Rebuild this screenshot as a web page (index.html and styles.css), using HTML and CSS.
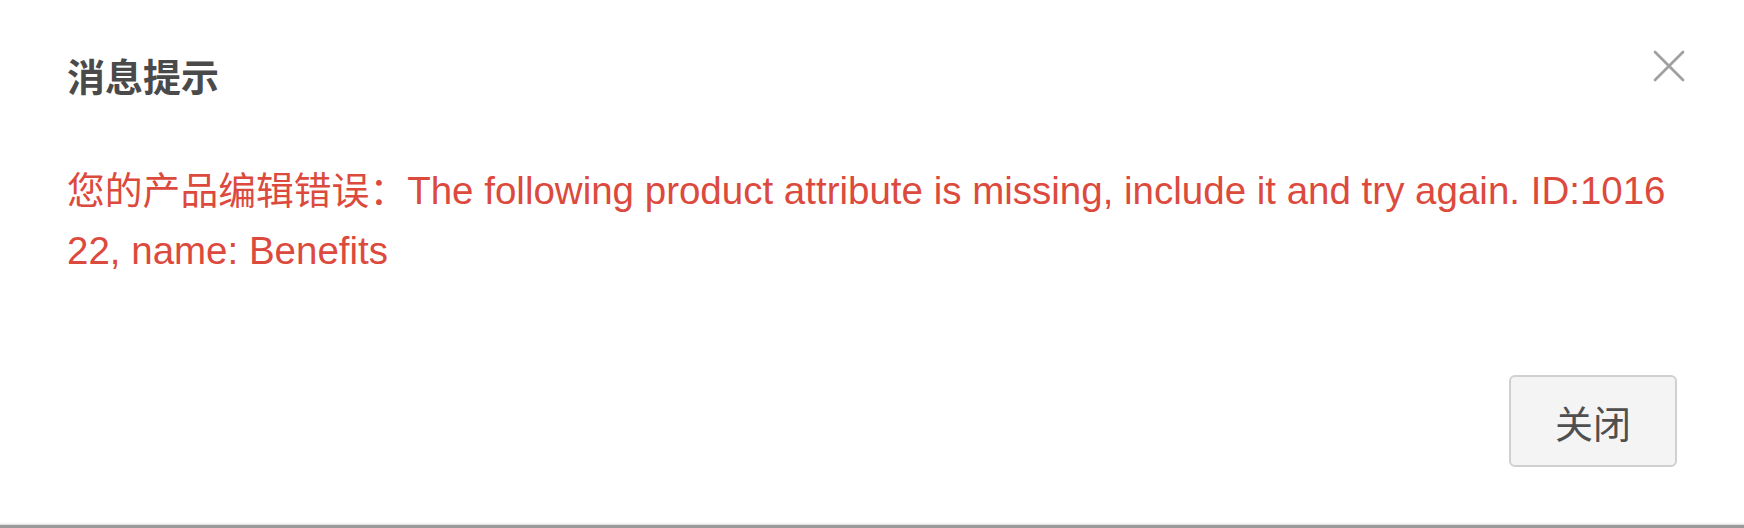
FILE: index.html
```html
<!DOCTYPE html>
<html lang="zh-CN">
<head>
<meta charset="utf-8">
<title>消息提示</title>
<link rel="stylesheet" href="styles.css">
</head>
<body>
<div class="dialog">
  <div class="dialog-header">
    <div class="dialog-title">消息提示</div>
    <button class="dialog-close" aria-label="close">
      <svg width="32" height="32" viewBox="0 0 32 32"><path d="M2 2 L30 30 M30 2 L2 30" stroke="#a0a0a0" stroke-width="2.8" stroke-linecap="round" fill="none"/></svg>
    </button>
  </div>
  <div class="dialog-body">
    <p class="dialog-message"><span class="msg-prefix">您的产品编辑错误：</span>The following product attribute is missing, include it and try again. ID:101622, name: Benefits</p>
  </div>
  <div class="dialog-footer">
    <button class="btn-close">关闭</button>
  </div>
</div>
</body>
</html>
```
FILE: styles.css
```css
html, body {
  margin: 0;
  padding: 0;
  background: #ffffff;
}
body {
  font-family: "Liberation Sans", "Noto Sans CJK SC", sans-serif;
}
.dialog {
  width: 1744px;
  height: 528px;
  box-sizing: border-box;
  display: flex;
  flex-direction: column;
  border-bottom: 3px solid #9a9a9a;
  box-shadow: inset 0 -4px 2px -3px #d8d8d8;
}
.dialog-header {
  display: flex;
  justify-content: space-between;
  align-items: flex-start;
  padding: 50px 59px 0 67px;
}
.dialog-title {
  font-size: 38px;
  line-height: 56px;
  font-weight: 700;
  color: #4a4a4a;
}
.dialog-close {
  border: 0;
  background: none;
  padding: 0;
  width: 32px;
  height: 32px;
  display: flex;
}
.dialog-body {
  padding: 55px 69px 0 67px;
}
.dialog-message {
  margin: 0;
  font-size: 38.5px;
  line-height: 60px;
  color: #dc4a3d;
  word-break: break-all;
}
.msg-prefix {
  font-size: 37.8px;
}
.dialog-footer {
  display: flex;
  justify-content: flex-end;
  padding: 94px 67px 0 0;
}
.btn-close {
  width: 168px;
  height: 92px;
  box-sizing: border-box;
  border: 2px solid #d0d0d0;
  border-radius: 6px;
  background: #f4f4f4;
  color: #4f4f4f;
  font-family: "Liberation Sans", "Noto Sans CJK SC", sans-serif;
  font-size: 38px;
  padding: 0;
}
```
